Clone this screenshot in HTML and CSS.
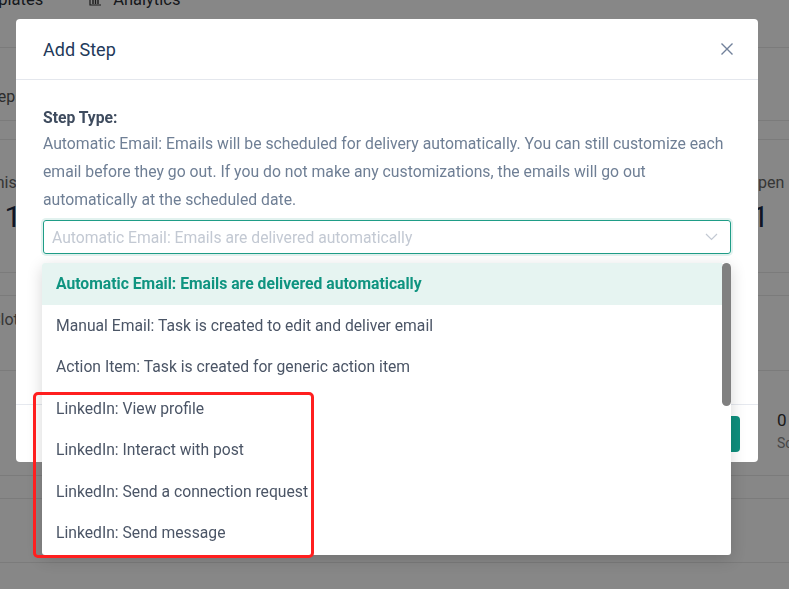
FILE: index.html
```html
<!DOCTYPE html>
<html lang="en">
<head>
    <meta charset="UTF-8">
    <meta name="viewport" content="width=device-width, initial-scale=1.0">
    <title>Add Step</title>
    <link rel="stylesheet" href="styles.css">
</head>
<body>
    <!-- 背景页面 -->
    <div class="page">
        <div class="row nav-row">
            <span class="nav-item nav-first">Templates</span>
            <span class="nav-item">
                <svg class="nav-icon" width="13" height="12" viewBox="0 0 13 12">
                    <path d="M1 1v10h11" fill="none" stroke="#333" stroke-width="1.2"/>
                    <path d="M4 10V6M6.5 10V3M9 10V5" fill="none" stroke="#333" stroke-width="1.4"/>
                </svg>
                Analytics
            </span>
        </div>
        <div class="row tab-row"><span class="tab">Steps</span></div>
        <div class="row thin-row"></div>
        <div class="row stat-row">
            <div class="stat stat-left">
                <div class="stat-label">Finished</div>
                <div class="stat-num">1</div>
            </div>
            <div class="stat stat-right">
                <div class="stat-label">Open</div>
                <div class="stat-num">1</div>
            </div>
        </div>
        <div class="row gap-row"></div>
        <div class="row note-row"><span class="note">Slots</span></div>
        <div class="row count-row">
            <div class="count">
                <div class="count-num">0</div>
                <div class="count-label">Scheduled</div>
            </div>
        </div>
        <div class="row gap-row"></div>
        <div class="row tall-row"></div>
    </div>

    <!-- 遮罩 -->
    <div class="mask"></div>

    <!-- 弹窗 -->
    <div class="modal">
        <div class="modal-header">
            <h2 class="modal-title">Add Step</h2>
            <svg class="close" width="14" height="14" viewBox="0 0 14 14">
                <path d="M1.5 1.5l11 11M12.5 1.5l-11 11" stroke="#71819a" stroke-width="1.4" fill="none"/>
            </svg>
        </div>

        <div class="modal-body">
            <div class="field-label">Step Type:</div>
            <p class="field-desc">Automatic Email: Emails will be scheduled for delivery automatically. You can still customize each email before they go out. If you do not make any customizations, the emails will go out automatically at the scheduled date.</p>

            <div class="select-wrap">
                <div class="select">
                    <span class="placeholder">Automatic Email: Emails are delivered automatically</span>
                    <svg width="13" height="8" viewBox="0 0 13 8">
                        <path d="M1 1l5.5 5.5L12 1" stroke="#c3c9d3" stroke-width="1.2" fill="none"/>
                    </svg>
                </div>

                <!-- 下拉列表 -->
                <div class="dropdown">
                    <ul class="options">
                        <li class="option active">Automatic Email: Emails are delivered automatically</li>
                        <li class="option">Manual Email: Task is created to edit and deliver email</li>
                        <li class="option">Action Item: Task is created for generic action item</li>
                        <li class="option">LinkedIn: View profile</li>
                        <li class="option">LinkedIn: Interact with post</li>
                        <li class="option">LinkedIn: Send a connection request</li>
                        <li class="option">LinkedIn: Send message</li>
                    </ul>
                    <div class="scroll-track"><div class="scroll-thumb"></div></div>
                </div>
            </div>
        </div>

        <div class="modal-footer">
            <button class="btn">Add Step</button>
        </div>
    </div>

    <!-- 标注框 -->
    <div class="mark"></div>
</body>
</html>
```

FILE: styles.css
```css
*{
    margin: 0;
    padding: 0;
    box-sizing: border-box;
}

body{
    font-family: Roboto, "Liberation Sans", Arial, sans-serif;
    background-color: #fff;
    overflow: hidden;
    height: 589px;
}

/* 背景页面 */
.page{
    color: #2b2f36;
}

.row{
    border-bottom: 1px solid #e9e9e9;
    display: flex;
}

.nav-row{
    height: 48px;
    align-items: flex-start;
    font-size: 16.5px;
}

.nav-item{
    display: flex;
    align-items: center;
    margin-top: -9px;
    line-height: 18px;
}

.nav-first{
    margin-left: -34px;
    margin-right: 46px;
}

.nav-icon{
    margin-right: 11px;
}

.tab-row{
    height: 73px;
    align-items: flex-end;
    padding-bottom: 14px;
}

.tab{
    margin-left: -17px;
    font-size: 16px;
    line-height: 18px;
    color: #555;
}

.thin-row{
    height: 19px;
}

.stat-row{
    height: 133px;
    justify-content: space-between;
    padding-top: 34px;
}

.stat{
    width: 80px;
    text-align: center;
}

.stat-left{
    margin-left: -27px;
}

/* 右侧统计左对齐 */
.stat-right{
    width: 60px;
    margin-right: -18px;
    text-align: left;
}

.stat-right .stat-num{
    padding-left: 5px;
}

.stat-label{
    font-size: 16px;
    line-height: 18px;
    color: #666;
}

.stat-num{
    font-size: 30px;
    line-height: 36px;
    margin-top: 7px;
    color: #1c2a44;
}

.gap-row{
    height: 23px;
}

.note-row{
    height: 75px;
    padding-top: 15px;
}

.note{
    margin-left: -9px;
    font-size: 16px;
    line-height: 18px;
    color: #666;
}

.count-row{
    height: 105px;
    padding-top: 40px;
}

.count{
    margin-left: 777px;
    white-space: nowrap;
}

.count-num{
    font-size: 17px;
    line-height: 18px;
    color: #333;
}

.count-label{
    font-size: 14px;
    line-height: 18px;
    margin-top: 5px;
    color: #888;
}

.tall-row{
    height: 64px;
}

/* 遮罩 */
.mask{
    position: fixed;
    inset: 0;
    background-color: rgba(0, 0, 0, 0.47);
}

/* 弹窗 */
.modal{
    position: fixed;
    left: 16px;
    top: 19px;
    width: 742px;
    height: 443px;
    background-color: #fff;
    border-radius: 4px;
    display: flex;
    flex-direction: column;
}

.modal-header{
    height: 61px;
    padding: 0 24px 0 27px;
    display: flex;
    align-items: center;
    justify-content: space-between;
    border-bottom: 1px solid #e4e7ed;
}

.modal-title{
    font-size: 18px;
    font-weight: 400;
    color: #22395a;
}

.modal-body{
    flex: 1;
    padding: 28px 27px 0;
}

.field-label{
    font-size: 15.7px;
    font-weight: 700;
    line-height: 20px;
    color: #3e4b5e;
}

.field-desc{
    margin-top: 2px;
    font-size: 15.75px;
    line-height: 28px;
    color: #6f7f95;
}

.select-wrap{
    position: relative;
    margin-top: 6px;
}

.select{
    height: 34px;
    border: 1px solid #1f9d87;
    border-radius: 3px;
    box-shadow: 0 0 0 2px rgba(31, 157, 135, 0.13);
    padding: 0 12px 0 8px;
    display: flex;
    align-items: center;
    justify-content: space-between;
}

.placeholder{
    font-size: 15.7px;
    color: #c3c9d3;
}

/* 下拉列表 */
.dropdown{
    position: absolute;
    left: -1px;
    top: 43px;
    width: 689px;
    height: 292px;
    background-color: #fff;
    border-radius: 3px;
    box-shadow: 0 4px 16px rgba(0, 0, 0, 0.16);
    display: flex;
    overflow: hidden;
}

.options{
    list-style: none;
    flex: 1;
}

.option{
    height: 41.5px;
    padding: 0 14px;
    display: flex;
    align-items: center;
    font-size: 15.7px;
    color: #4b5566;
}

.option.active{
    background-color: #e6f4f1;
    color: #0f9480;
    font-weight: 700;
}

.scroll-track{
    width: 9px;
}

.scroll-thumb{
    height: 143px;
    background-color: #808080;
    border-radius: 5px;
}

.modal-footer{
    height: 58px;
    border-top: 1px solid #e6e9ef;
    padding: 11px 18px 10px;
    display: flex;
    justify-content: flex-end;
}

.btn{
    width: 100px;
    height: 36px;
    border: none;
    border-radius: 4px;
    background-color: #0e8f7d;
    color: #fff;
    font-family: inherit;
    font-size: 15px;
}

/* 标注框 */
.mark{
    position: fixed;
    left: 33px;
    top: 392px;
    width: 281px;
    height: 166px;
    border: 3px solid #ff1f1f;
    border-radius: 5px;
}
```
